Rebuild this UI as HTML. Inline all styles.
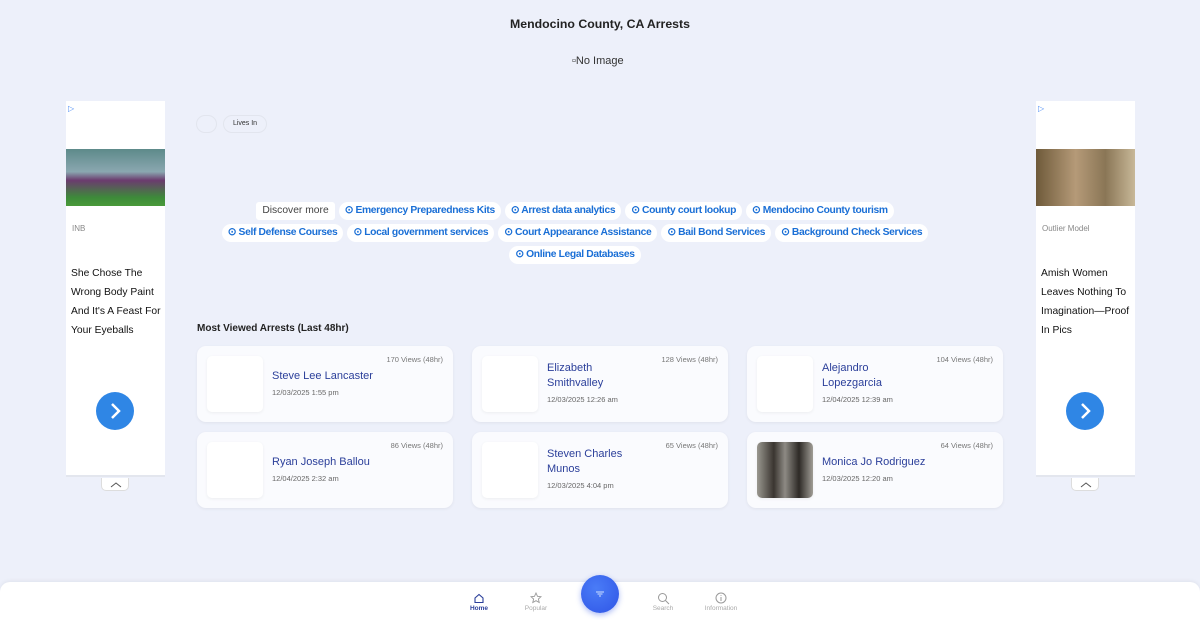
<!DOCTYPE html>
<html><head><meta charset="utf-8"><style>
*{box-sizing:border-box;margin:0;padding:0}
body{width:1200px;height:620px;overflow:hidden;background:#edf0fa;font-family:"Liberation Sans",sans-serif;position:relative}
.title{position:absolute;top:17px;left:0;width:1200px;text-align:center;font-weight:bold;font-size:12.3px;color:#222}
.noimg{position:absolute;top:55px;left:572px;font-size:11px;color:#333}
.ad{position:absolute;top:101px;width:99px;height:376px;background:#fff;border-bottom:2px solid #e3e6ee}
.ad .img{position:absolute;top:48px;left:0;width:99px;height:57px}
.ad .src{position:absolute;top:123px;left:6px;font-size:8px;color:#888}
.ad .txt{position:absolute;top:163px;left:5px;font-size:10.3px;line-height:19px;color:#111;width:92px}
.ad .btn{position:absolute;top:291px;left:30px;width:38px;height:38px;border-radius:50%;background:#2f86e5}
.ad .tri{position:absolute;top:3px;left:2px;font-size:8px;color:#4a8af4}
.tab{position:absolute;top:478px;width:28px;height:13px;background:#fff;border:1px solid #ddd;border-top:none;border-radius:0 0 5px 5px}
.pill{position:absolute;top:115px;height:18px;border:1px solid #e2e5ee;border-radius:9px;font-size:7px;color:#333;line-height:16px;text-align:center}
.chips{position:absolute;top:202px;left:190px;width:770px;text-align:center;font-size:10.3px}
.chips div{margin-bottom:4px;height:18px}
.chip{display:inline-block;background:#fff;border-radius:9px;padding:0 6px;height:18px;line-height:18px;color:#1a6fd6;margin:0 2px;font-weight:bold;letter-spacing:-.35px}
.chip.d{color:#444;font-weight:normal;border-radius:3px;letter-spacing:0}
.h2{position:absolute;top:323px;left:197px;font-size:10px;font-weight:bold;color:#222}
.card{position:absolute;width:256px;height:76px;background:#fafbfe;border-radius:9px;box-shadow:0 1px 3px rgba(0,0,0,.06)}
.card .ph{position:absolute;left:10px;top:10px;width:56px;height:56px;border-radius:5px;background:#fff;box-shadow:0 1px 3px rgba(0,0,0,.06)}
.card .v{position:absolute;right:10px;top:9px;font-size:7.5px;color:#777}
.card .n{position:absolute;left:75px;font-size:11px;color:#2b3f9a;line-height:15px}
.card .d{position:absolute;left:75px;font-size:7.5px;color:#666}
.nav{position:absolute;top:582px;left:0;width:1200px;height:38px;background:#fff;border-radius:10px 10px 0 0;box-shadow:0 -1px 4px rgba(0,0,0,.06)}
.ni{position:absolute;top:605px;font-size:6.5px;color:#aaa;text-align:center;width:50px}
.fab{position:absolute;top:575px;left:581px;width:38px;height:38px;border-radius:50%;background:radial-gradient(circle at 40% 35%,#4a7cf7,#2f55e6);box-shadow:0 2px 6px rgba(47,85,230,.4)}
</style></head><body>
<div class="title">Mendocino County, CA Arrests</div>
<div class="noimg">&#9643;No Image</div>

<div class="ad" style="left:66px"><span class="tri">▷</span><div class="img" style="background:linear-gradient(180deg,#5d8a8a 0%,#8aa7b0 40%,#6b3b6e 55%,#3d8a3a 85%,#4a9a3a 100%)"></div><div class="src">INB</div><div class="txt">She Chose The Wrong Body Paint And It's A Feast For Your Eyeballs</div><div class="btn"><svg width="38" height="38"><path d="M16 12l7 7-7 7" stroke="#fff" stroke-width="2.5" fill="none"/></svg></div></div>
<div class="tab" style="left:101px"><svg width="28" height="12"><path d="M9 8l5-4 5 4" stroke="#555" fill="none"/></svg></div>
<div class="ad" style="left:1036px"><span class="tri">▷</span><div class="img" style="background:linear-gradient(90deg,#6e5a3a,#b59a78 40%,#8a7656 70%,#c8b898)"></div><div class="src">Outlier Model</div><div class="txt">Amish Women Leaves Nothing To Imagination—Proof In Pics</div><div class="btn"><svg width="38" height="38"><path d="M16 12l7 7-7 7" stroke="#fff" stroke-width="2.5" fill="none"/></svg></div></div>
<div class="tab" style="left:1071px"><svg width="28" height="12"><path d="M9 8l5-4 5 4" stroke="#555" fill="none"/></svg></div>

<div class="pill" style="left:196px;width:21px"></div>
<div class="pill" style="left:223px;width:44px">Lives In</div>

<div class="chips">
<div><span class="chip d">Discover more</span><span class="chip">⊙ Emergency Preparedness Kits</span><span class="chip">⊙ Arrest data analytics</span><span class="chip">⊙ County court lookup</span><span class="chip">⊙ Mendocino County tourism</span></div>
<div><span class="chip">⊙ Self Defense Courses</span><span class="chip">⊙ Local government services</span><span class="chip">⊙ Court Appearance Assistance</span><span class="chip">⊙ Bail Bond Services</span><span class="chip">⊙ Background Check Services</span></div>
<div><span class="chip">⊙ Online Legal Databases</span></div>
</div>

<div class="h2">Most Viewed Arrests (Last 48hr)</div>

<div class="card" style="left:197px;top:346px"><div class="ph"></div><div class="v">170 Views (48hr)</div><div class="n" style="top:23px">Steve Lee Lancaster</div><div class="d" style="top:42px">12/03/2025 1:55 pm</div></div>
<div class="card" style="left:472px;top:346px"><div class="ph"></div><div class="v">128 Views (48hr)</div><div class="n" style="top:15px">Elizabeth<br>Smithvalley</div><div class="d" style="top:49px">12/03/2025 12:26 am</div></div>
<div class="card" style="left:747px;top:346px"><div class="ph"></div><div class="v">104 Views (48hr)</div><div class="n" style="top:15px">Alejandro<br>Lopezgarcia</div><div class="d" style="top:49px">12/04/2025 12:39 am</div></div>
<div class="card" style="left:197px;top:432px"><div class="ph"></div><div class="v">86 Views (48hr)</div><div class="n" style="top:23px">Ryan Joseph Ballou</div><div class="d" style="top:42px">12/04/2025 2:32 am</div></div>
<div class="card" style="left:472px;top:432px"><div class="ph"></div><div class="v">65 Views (48hr)</div><div class="n" style="top:15px">Steven Charles<br>Munos</div><div class="d" style="top:49px">12/03/2025 4:04 pm</div></div>
<div class="card" style="left:747px;top:432px"><div class="ph" style="background:linear-gradient(90deg,#9a9890,#3a3530 30%,#8d8a84 50%,#2e2a26 75%,#a09d96)"></div><div class="v">64 Views (48hr)</div><div class="n" style="top:23px">Monica Jo Rodriguez</div><div class="d" style="top:42px">12/03/2025 12:20 am</div></div>

<div class="nav"></div>
<svg style="position:absolute;left:473px;top:592px" width="12" height="12"><path d="M2 6L6 2.5 10 6V10.5H2Z" stroke="#2b3f9a" fill="none" stroke-width="1.1"/></svg>
<div class="ni" style="left:454px;color:#2b3f9a;font-weight:bold">Home</div>
<svg style="position:absolute;left:530px;top:592px" width="12" height="12"><path d="M6 1l1.5 3.3 3.5.4-2.6 2.3.8 3.5L6 8.7 2.8 10.5l.8-3.5L1 4.7l3.5-.4z" stroke="#999" fill="none" stroke-width=".9"/></svg>
<div class="ni" style="left:511px">Popular</div>
<div class="fab"><svg width="38" height="38"><path d="M15 17h8M16.5 19h5M18 21h2" stroke="#cfe0ff" stroke-width="1"/></svg></div>
<svg style="position:absolute;left:657px;top:592px" width="13" height="13"><circle cx="5.5" cy="5.5" r="4" stroke="#999" fill="none"/><path d="M8.5 8.5l3.5 3.5" stroke="#999"/></svg>
<div class="ni" style="left:638px">Search</div>
<svg style="position:absolute;left:715px;top:592px" width="12" height="12"><circle cx="6" cy="6" r="5" stroke="#999" fill="none"/><path d="M6 5v4M6 3v.8" stroke="#999"/></svg>
<div class="ni" style="left:696px">Information</div>
</body></html>
